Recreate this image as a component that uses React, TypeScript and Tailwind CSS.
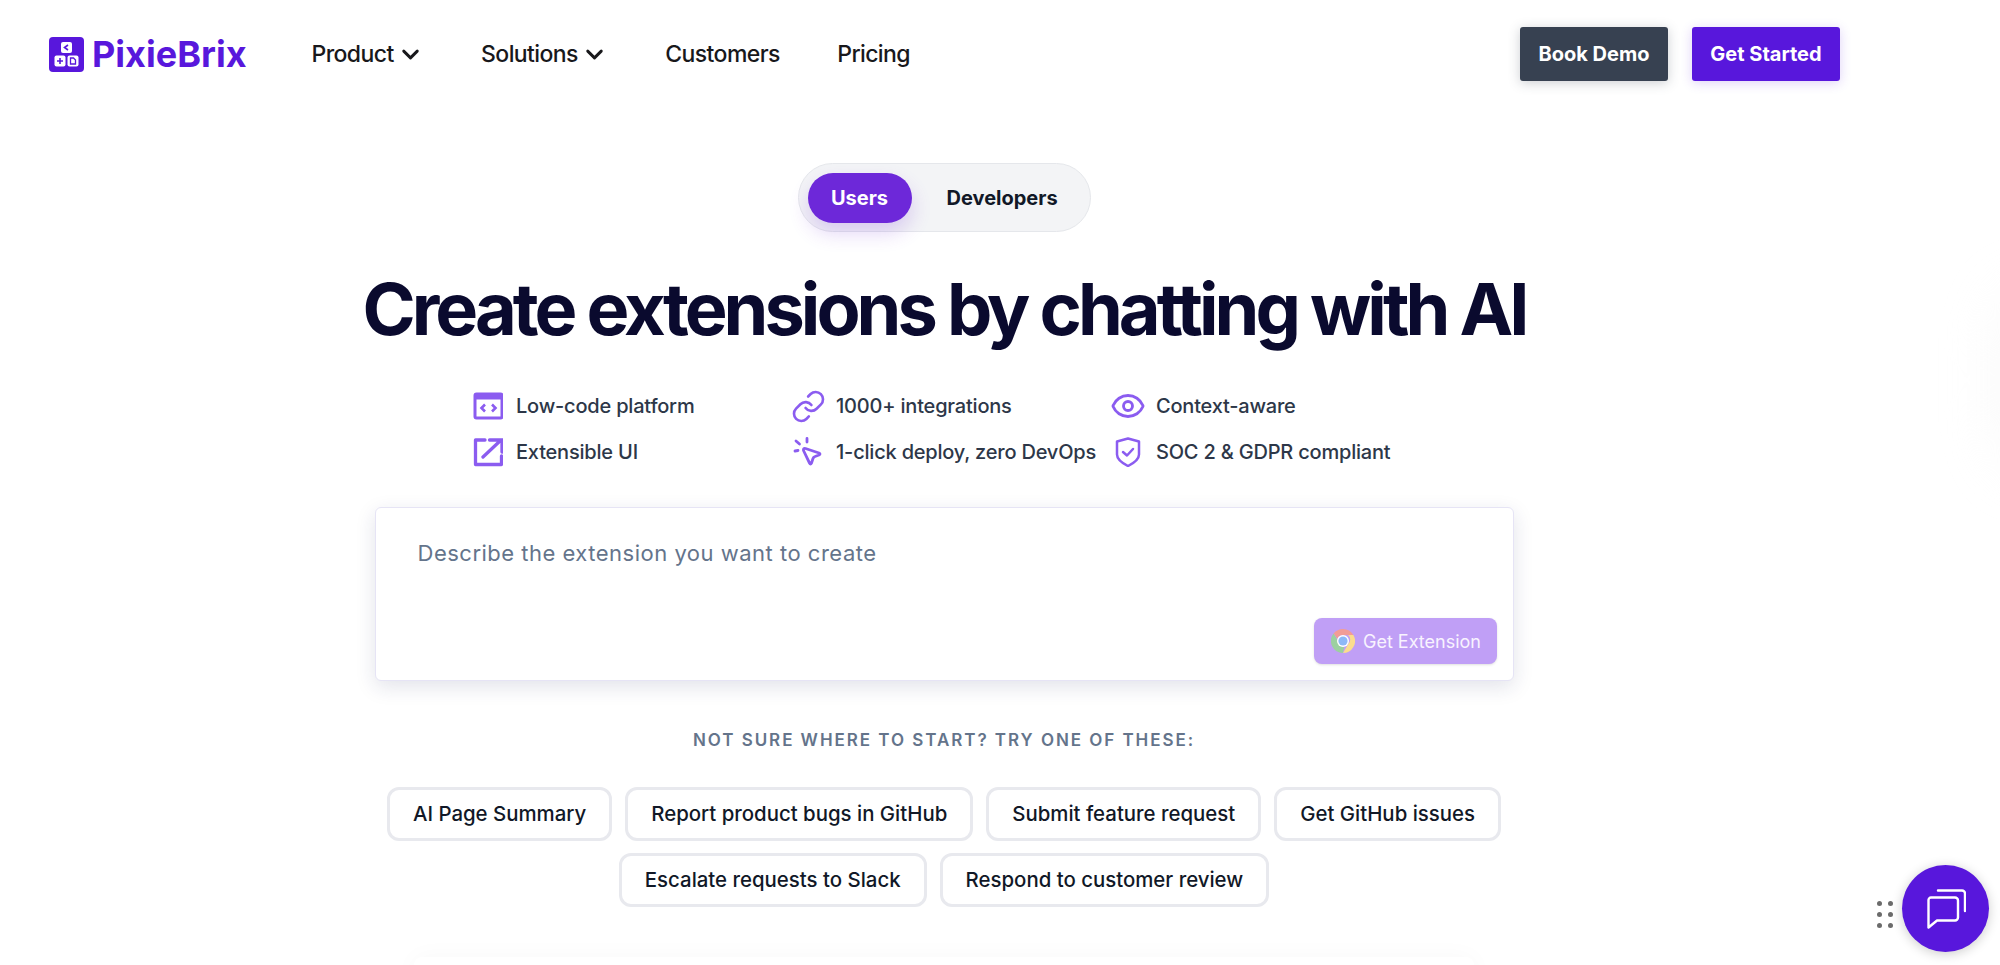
import React from 'react';
import { ChevronDown, Eye, Link } from 'lucide-react';

const LogoMark = () => (
  <svg width="35" height="35" viewBox="0 0 35 35" className="shrink-0">
    <rect width="35" height="35" rx="4" fill="#5817dc" />
    <rect x="12" y="5" width="11" height="11" rx="2" fill="#fff" />
    <path d="M19 8l-3.5 2.5 3.5 2.5" fill="none" stroke="#5817dc" strokeWidth="1.6" />
    <rect x="5.5" y="18.5" width="11" height="11" rx="2" fill="#fff" />
    <path d="M11 21v6M8 24h6" stroke="#5817dc" strokeWidth="1.6" />
    <rect x="18.5" y="18.5" width="11" height="11" rx="2" fill="#fff" />
    <path d="M21.5 21h3l2 2v4h-5z" fill="none" stroke="#5817dc" strokeWidth="1.3" />
  </svg>
);

const CodeWindow = () => (
  <svg width="30" height="30" viewBox="0 0 30 30" fill="none" stroke="#8b5cf0" strokeWidth="3">
    <rect x="2" y="3" width="27" height="24" rx="1.5" />
    <path d="M2 6h27" strokeWidth="5" />
    <path d="M12 13.5l-3.5 3.5 3.5 3.5M19 13.5l3.5 3.5-3.5 3.5" strokeWidth="2.6" />
  </svg>
);

const ExternalBox = () => (
  <svg width="30" height="30" viewBox="0 0 30 30" fill="none" stroke="#8b5cf0" strokeWidth="3.3">
    <path d="M12 3H2.5v24.5h26V19" strokeLinejoin="round" strokeLinecap="round" />
    <path d="M10 20L27 4M16.5 3H29V15" strokeLinecap="round" />
  </svg>
);

const ClickPointer = () => (
  <svg width="30" height="30" viewBox="0 0 30 30" fill="none" stroke="#8b5cf0" strokeWidth="2.8" strokeLinecap="round" strokeLinejoin="round">
    <path d="M12.5 11.5L26 16Q28 17 26 18L22 19.5Q20.5 20 20 21.5L18.5 26Q17.5 28 16.5 26L10.5 13.5Q10 11 12.5 11.5Z" />
    <path d="M3 4l3.5 3M14 1.5V5M2 14l3-.5" />
  </svg>
);

const Shield = () => (
  <svg width="30" height="30" viewBox="0 0 30 30" fill="none" stroke="#8b5cf0" strokeWidth="2.5" strokeLinecap="round" strokeLinejoin="round">
    <path d="M15 1.5l11 3v13c0 5-5 8.5-11 11.5-6-3-11-6.5-11-11.5v-13z" />
    <path d="M10 15l4 3.5 6-6.5" />
  </svg>
);

const ChromeLogo = () => (
  <svg width="24" height="24" viewBox="0 0 24 24">
    <path d="M12 0a12 12 0 0 1 10.4 6H12a6 6 0 0 0-5.6 3.7L2.6 4.5A12 12 0 0 1 12 0z" fill="#f29c96" />
    <path d="M22.4 6A12 12 0 0 1 12 24l5.2-9a6 6 0 0 0 0-9z" fill="#fbdc8e" />
    <path d="M2.6 4.5l5 8.5a5 5 0 0 0 5.6 5L12 24A12 12 0 0 1 2.6 4.5z" fill="#9cd0a0" />
    <circle cx="12" cy="12" r="6" fill="#fff" />
    <circle cx="12" cy="12" r="4.6" fill="#8db8f7" />
  </svg>
);

const ChatBubbles = () => (
  <svg width="40" height="40" viewBox="0 0 40 40" fill="none" stroke="#fff" strokeWidth="2.4" strokeLinecap="round" strokeLinejoin="round">
    <path d="M12 1.5h24a3 3 0 0 1 3 3V22" />
    <path d="M5 8.5h24a3 3 0 0 1 3 3v17a3 3 0 0 1-3 3H11l-8.5 7V11a2.5 2.5 0 0 1 2.5-2.5z" />
  </svg>
);

const features = [
  { icon: <CodeWindow />, label: 'Low-code platform' },
  { icon: <Link size={35} color="#8b5cf0" strokeWidth={1.8} className="-m-[2.5px]" />, label: '1000+ integrations' },
  { icon: <Eye size={36} color="#8b5cf0" strokeWidth={1.9} className="-m-[3px]" />, label: 'Context-aware' },
  { icon: <ExternalBox />, label: 'Extensible UI' },
  { icon: <ClickPointer />, label: '1-click deploy, zero DevOps' },
  { icon: <Shield />, label: 'SOC 2 & GDPR compliant' },
];

const chipRows = [
  ['AI Page Summary', 'Report product bugs in GitHub', 'Submit feature request', 'Get GitHub issues'],
  ['Escalate requests to Slack', 'Respond to customer review'],
];

const NavItem = ({ label, menu }: { label: string; menu?: boolean }) => (
  <a className="flex items-center gap-[3px] text-[23px] font-medium tracking-[-0.6px] text-[#18181b]">
    {label}
    {menu && <ChevronDown size={27} strokeWidth={2.6} />}
  </a>
);

export default function App() {
  return (
    <div className="relative h-[965px] overflow-hidden bg-white font-['Inter',sans-serif]">
      <header className="flex h-[108px] items-center justify-between pl-[49px] pr-[160px]">
        <div className="flex items-center">
          <div className="flex items-center gap-[8px]">
            <LogoMark />
            <span className="text-[36px] font-bold text-[#5817dc]">PixieBrix</span>
          </div>
          <nav className="ml-[65px] flex items-center gap-[57.5px]">
            <NavItem label="Product" menu />
            <NavItem label="Solutions" menu />
            <NavItem label="Customers" />
            <NavItem label="Pricing" />
          </nav>
        </div>
        <div className="flex items-center gap-[24px]">
          <button className="flex h-[54px] w-[148px] items-center justify-center rounded-[3px] bg-[#374151] text-[20px] font-bold text-white shadow-[0_2px_12px_rgba(55,65,81,0.25)]">
            Book Demo
          </button>
          <button className="flex h-[54px] w-[148px] items-center justify-center rounded-[3px] bg-[#5817dc] text-[20px] font-bold text-white shadow-[0_2px_12px_rgba(88,23,220,0.2)]">
            Get Started
          </button>
        </div>
      </header>

      <main className="flex flex-col items-center pr-[112px] pt-[55px]">
        <div className="flex h-[69px] w-[293px] items-center rounded-full border border-[#e5e7eb] bg-[#f3f4f6] pl-[9px]">
          <button className="h-[50px] w-[104px] rounded-full bg-[#6d28d9] text-[20px] font-bold text-white shadow-[0_10px_20px_rgba(109,40,217,0.2)]">
            Users
          </button>
          <button className="ml-[35px] text-[20px] font-bold text-[#111827]">Developers</button>
        </div>

        <h1 className="mt-[37px] whitespace-nowrap text-[72px] font-bold leading-[80px] tracking-[-3.95px] text-[#0a0a2e]">
          Create extensions by chatting with AI
        </h1>

        <div className="mt-[42px] grid w-[942px] grid-cols-[320px_320px_302px] gap-y-[16px]">
          {features.map((f) => (
            <div key={f.label} className="flex h-[30px] items-center gap-[13px] text-[20px] font-medium tracking-[-0.2px] text-[#2d3748]">
              {f.icon}
              <span className="whitespace-nowrap">{f.label}</span>
            </div>
          ))}
        </div>

        <div className="mt-[40px] flex h-[174px] w-[1139px] flex-col rounded-[6px] border border-[#e6e4f5] bg-white pb-[16px] pl-[42px] pr-[16px] pt-[30px] shadow-[0_6px_20px_rgba(30,41,90,0.13)]">
          <div className="text-[22px] leading-[30px] tracking-[0.5px] text-[#64748b]">Describe the extension you want to create</div>
          <div className="mt-auto flex justify-end">
            <button className="flex h-[46px] w-[183px] items-center justify-center gap-[8px] rounded-[8px] bg-[#c09ff6] pl-[2px] text-[18px] text-[#f8f3ff] shadow-sm">
              <ChromeLogo />
              Get Extension
            </button>
          </div>
        </div>

        <p className="mt-[48px] text-[17px] font-semibold uppercase leading-[22px] tracking-[1.95px] text-[#64748b]">
          Not sure where to start? Try one of these:
        </p>

        <div className="mt-[36px] flex flex-col items-center gap-[12px]">
          {chipRows.map((row, i) => (
            <div key={i} className="flex gap-[13px]">
              {row.map((chip) => (
                <button key={chip} className="h-[54px] whitespace-nowrap rounded-[12px] border-[3px] border-[#e8e9ee] bg-white px-[23px] text-[20.4px] font-medium text-[#111827]">
                  {chip}
                </button>
              ))}
            </div>
          ))}
        </div>

        <div className="mt-[50px] h-[200px] w-[1060px] rounded-[8px] bg-white shadow-[0_0_24px_rgba(0,0,0,0.03)]" />
      </main>

      <div className="absolute right-[-90px] top-[300px] h-[160px] w-[80px] rounded-full bg-[#f5f5f5] blur-[30px]" />

      <div className="absolute bottom-[13px] right-[11px] flex items-center gap-[9px]">
        <div className="mt-[12px] grid grid-cols-2 gap-x-[6px] gap-y-[6px]">
          {[0, 1, 2, 3, 4, 5].map((d) => (
            <span key={d} className="h-[5px] w-[5px] rounded-full bg-[#6b6b6b]" />
          ))}
        </div>
        <button className="flex h-[87px] w-[87px] items-center justify-center rounded-full bg-[#5817dc] shadow-[0_2px_12px_rgba(0,0,0,0.2)]">
          <ChatBubbles />
        </button>
      </div>
    </div>
  );
}
